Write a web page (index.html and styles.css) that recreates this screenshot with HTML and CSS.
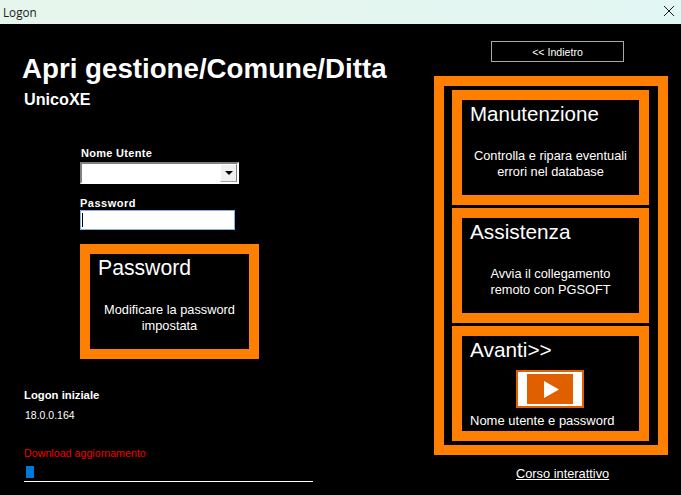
FILE: index.html
```html
<!DOCTYPE html>
<html lang="it">
<head>
<meta charset="utf-8">
<title>Logon</title>
<link rel="stylesheet" href="styles.css">
</head>
<body>
<div class="window">
  <header class="titlebar">
    <span class="titlebar-text">Logon</span>
    <svg class="close" width="12" height="12" viewBox="0 0 12 12"><path d="M1 1L11 11M11 1L1 11" stroke="#1a1a1a" stroke-width="1" fill="none"/></svg>
  </header>
  <main class="content">
    <section class="left">
      <h1 class="title">Apri gestione/Comune/Ditta</h1>
      <div class="subtitle">UnicoXE</div>
      <div class="form">
        <label class="label label-user">Nome Utente</label>
        <div class="combo">
          <span class="combo-btn"><svg width="8" height="4" viewBox="0 0 8 4"><path d="M0 0H8L4 4Z" fill="#000"/></svg></span>
        </div>
        <label class="label label-pass">Password</label>
        <div class="input"><span class="caret"></span></div>
        <div class="card card-pass">
          <div class="card-title title-wide">Password</div>
          <div class="card-text card-text-pass">Modificare la password<br>impostata</div>
        </div>
      </div>
      <div class="info-head">Logon iniziale</div>
      <div class="version">18.0.0.164</div>
      <div class="download">Download aggiornamento</div>
      <div class="progress"><span class="progress-fill"></span></div>
    </section>
    <aside class="right">
      <button class="back">&lt;&lt; Indietro</button>
      <div class="panel">
        <div class="card card-side">
          <div class="card-title title-narrow">Manutenzione</div>
          <div class="card-text card-text-side">Controlla e ripara eventuali<br>errori nel database</div>
        </div>
        <div class="card card-side">
          <div class="card-title">Assistenza</div>
          <div class="card-text card-text-side">Avvia il collegamento<br>remoto con PGSOFT</div>
        </div>
        <div class="card card-side">
          <div class="card-title">Avanti&gt;&gt;</div>
          <div class="play">
            <span class="play-inner"><svg class="play-icon" width="15" height="17" viewBox="0 0 15 17"><path d="M0 0L15 8.5L0 17Z" fill="#fff"/></svg></span>
          </div>
          <div class="card-foot">Nome utente e password</div>
        </div>
      </div>
      <a class="course" href="#">Corso interattivo</a>
    </aside>
  </main>
</div>
</body>
</html>
```
FILE: styles.css
```css
* { box-sizing: border-box; }
html, body { margin: 0; padding: 0; }
body { width: 681px; height: 495px; overflow: hidden; background: #000; font-family: "Liberation Sans", Arial, sans-serif; color: #fff; }
.window { width: 681px; height: 495px; display: flex; flex-direction: column; background: #000; }
.titlebar { height: 24px; flex: none; display: flex; align-items: center; justify-content: space-between; padding: 0 6px 0 3px; background: linear-gradient(90deg, #e7f6ec, #e2f6f3); }
.titlebar-text { font-family: "Open Sans", sans-serif; font-size: 11.7px; color: #1a1a1a; }
.close { display: block; margin-bottom: 2px; }
.content { flex: 1; display: flex; }
.left { width: 434px; flex: none; padding: 29px 0 0 22px; }
.title { margin: 0; font-size: 27.7px; line-height: 32px; font-weight: 700; white-space: nowrap; }
.subtitle { margin: 5px 0 0 2px; font-size: 16.2px; line-height: 18px; font-weight: 700; }
.form { margin: 39px 0 0 58px; display: flex; flex-direction: column; align-items: flex-start; }
.label { display: block; font-size: 11px; line-height: 12px; font-weight: 700; letter-spacing: 0.3px; }
.label-user { margin: 0 0 3px 1px; }
.label-pass { margin: 13px 0 1px 0; letter-spacing: 0.5px; }
.combo { width: 159px; height: 22px; background: #fff; border: 2px solid #fff; border-top-color: #808080; border-left-color: #808080; display: flex; justify-content: flex-end; align-items: stretch; }
.combo-btn { width: 17px; background: #f0f0f0; border: 1px solid #a0a0a0; border-right-color: #808080; border-top-color: #fff; border-left-color: #fff; display: flex; align-items: center; justify-content: center; }
.input { width: 155px; height: 20px; margin: 0; background: #fff; border: 1px solid #7eb4ea; padding: 2px 0 2px 1px; }
.caret { display: block; width: 1px; height: 14px; background: #000; }
.card { border: 10px solid #ff8000; background: #000; display: flex; flex-direction: column; }
.card-pass { width: 179px; height: 115px; margin-top: 14px; }
.card-title { font-size: 20.8px; line-height: 24px; margin: 2px 0 0 8px; white-space: nowrap; }
.title-wide { font-size: 21.2px; }
.title-narrow { font-size: 20.5px; }
.card-text { font-size: 12.8px; line-height: 16px; text-align: center; white-space: nowrap; }
.card-text-pass { margin-top: 22px; }
.card-text-side { margin-top: 22px; }
.info-head { margin: 29px 0 0 2px; font-size: 11.3px; line-height: 14px; font-weight: 700; }
.version { margin: 6px 0 0 3px; font-size: 10.5px; line-height: 14px; }
.download { margin: 24px 0 0 2px; font-size: 10.7px; line-height: 14px; color: #f00000; }
.progress { width: 289px; height: 17px; margin: 5px 0 0 2px; padding: 1px 0 0 2px; border-bottom: 1px solid #fff; }
.progress-fill { display: block; width: 8px; height: 12px; background: #0078d7; }
.right { flex: 1; display: flex; flex-direction: column; align-items: flex-start; padding-top: 17px; }
.back { width: 133px; height: 21px; margin-left: 57px; padding: 0; background: #000; border: 1px solid #a8a8a8; color: #fff; font: 10.6px/21px "Liberation Sans", Arial, sans-serif; }
.panel { width: 234px; height: 379px; margin-top: 14px; border: 10px solid #ff8000; padding: 4px 9px 4px 8px; display: flex; flex-direction: column; gap: 3px; background: #000; }
.card-side { width: 197px; height: 115px; flex: none; }
.play { width: 68px; height: 38px; margin: 8px 0 0 54px; border: 2px solid #e06000; background: #fff; padding: 2px 9px; }
.play-inner { display: flex; width: 46px; height: 30px; align-items: center; justify-content: center; background: #e06000; }
.play-icon { margin-left: 3px; }
.card-foot { font-size: 13px; line-height: 16px; margin: 5px 0 0 8px; white-space: nowrap; }
.course { margin: 11px 0 0 82px; font-size: 12.8px; line-height: 15px; color: #fff; text-decoration: underline; }
```
